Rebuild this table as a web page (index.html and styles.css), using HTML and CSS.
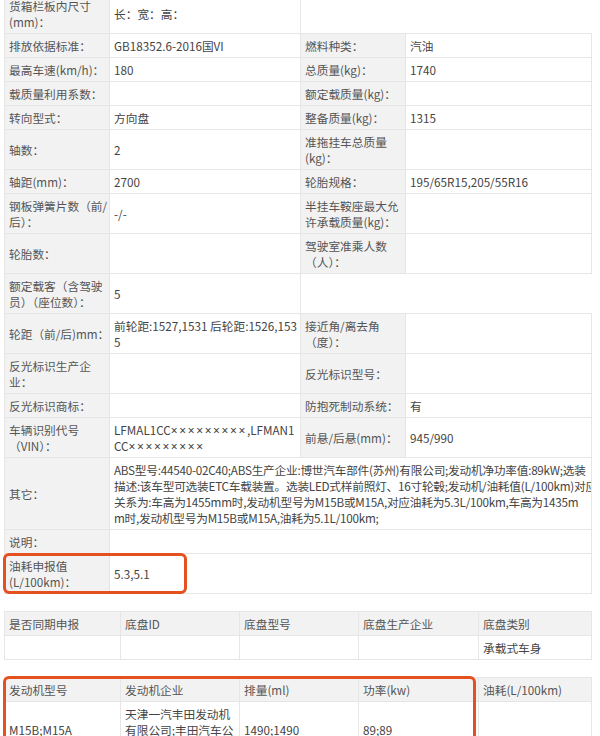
FILE: index.html
```html
<!DOCTYPE html>
<html lang="zh-CN">
<head>
<meta charset="UTF-8" />
<title>车辆参数</title>
<meta name="viewport" content="width=device-width, initial-scale=1" />
<link rel="stylesheet" href="styles.css">
</head>
<body>
  <div class="sheet">
    <!-- 主参数表 -->
    <table class="params">
      <colgroup>
        <col class="c-lbl"><col class="c-val"><col class="c-lbl"><col class="c-val2">
      </colgroup>
      <tr>
        <td class="lbl">货箱栏板内尺寸<br>(mm)：</td>
        <td>长：宽：高：</td>
        <td class="blank" colspan="2"></td>
      </tr>
      <tr>
        <td class="lbl">排放依据标准：</td><td>GB18352.6-2016国VI</td>
        <td class="lbl">燃料种类：</td><td>汽油</td>
      </tr>
      <tr>
        <td class="lbl">最高车速(km/h)：</td><td>180</td>
        <td class="lbl">总质量(kg)：</td><td>1740</td>
      </tr>
      <tr>
        <td class="lbl">载质量利用系数：</td><td></td>
        <td class="lbl">额定载质量(kg)：</td><td></td>
      </tr>
      <tr>
        <td class="lbl">转向型式：</td><td>方向盘</td>
        <td class="lbl">整备质量(kg)：</td><td>1315</td>
      </tr>
      <tr>
        <td class="lbl">轴数：</td><td>2</td>
        <td class="lbl">准拖挂车总质量<br>(kg)：</td><td></td>
      </tr>
      <tr>
        <td class="lbl">轴距(mm)：</td><td>2700</td>
        <td class="lbl">轮胎规格：</td><td>195/65R15,205/55R16</td>
      </tr>
      <tr>
        <td class="lbl">钢板弹簧片数（前/<br>后）：</td><td>-/-</td>
        <td class="lbl">半挂车鞍座最大允<br>许承载质量(kg)：</td><td></td>
      </tr>
      <tr>
        <td class="lbl">轮胎数：</td><td></td>
        <td class="lbl">驾驶室准乘人数<br>（人）：</td><td></td>
      </tr>
      <tr>
        <td class="lbl">额定载客（含驾驶<br>员）（座位数）：</td><td>5</td>
        <td class="blank" colspan="2"></td>
      </tr>
      <tr>
        <td class="lbl">轮距（前/后)mm：</td><td>前轮距:1527,1531 后轮距:1526,153<br>5</td>
        <td class="lbl">接近角/离去角<br>（度）：</td><td></td>
      </tr>
      <tr>
        <td class="lbl">反光标识生产企<br>业：</td><td></td>
        <td class="lbl">反光标识型号：</td><td></td>
      </tr>
      <tr>
        <td class="lbl">反光标识商标：</td><td></td>
        <td class="lbl">防抱死制动系统：</td><td>有</td>
      </tr>
      <tr>
        <td class="lbl">车辆识别代号<br>（VIN）：</td>
        <td>LFMAL1CC<span class="x">×××××××××</span>,LFMAN1<br>CC<span class="x">×××××××××</span></td>
        <td class="lbl">前悬/后悬(mm)：</td><td>945/990</td>
      </tr>
      <tr>
        <td class="lbl">其它：</td>
        <td class="note" colspan="3">ABS型号:44540-02C40;ABS生产企业:博世汽车部件(苏州)有限公司;发动机净功率值:89kW;选装<br>描述:该车型可选装ETC车载装置。选装LED式样前照灯、16寸轮毂;发动机/油耗值(L/100km)对应<br>关系为:车高为1455mm时,发动机型号为M15B或M15A,对应油耗为5.3L/100km,车高为1435m<br>m时,发动机型号为M15B或M15A,油耗为5.1L/100km;</td>
      </tr>
      <tr>
        <td class="lbl">说明：</td><td colspan="3"></td>
      </tr>
      <tr>
        <td class="lbl marked">油耗申报值<br>(L/100km)：<span class="ring ring-fuel"></span></td>
        <td colspan="3">5.3,5.1</td>
      </tr>
    </table>

    <!-- 底盘 -->
    <table class="grid">
      <colgroup>
        <col class="g1"><col class="g2"><col class="g3"><col class="g4"><col class="g5">
      </colgroup>
      <tr class="head">
        <td>是否同期申报</td><td>底盘ID</td><td>底盘型号</td><td>底盘生产企业</td><td>底盘类别</td>
      </tr>
      <tr>
        <td></td><td></td><td></td><td></td><td>承载式车身</td>
      </tr>
    </table>

    <!-- 发动机 -->
    <div class="engine">
      <table class="grid">
        <colgroup>
          <col class="g1"><col class="g2"><col class="g3"><col class="g4"><col class="g5">
        </colgroup>
        <tr class="head">
          <td>发动机型号</td><td>发动机企业</td><td>排量(ml)</td><td>功率(kw)</td><td>油耗(L/100km)</td>
        </tr>
        <tr>
          <td>M15B;M15A</td><td>天津一汽丰田发动机<br>有限公司;丰田汽车公<br>司</td><td>1490;1490</td><td>89;89</td><td></td>
        </tr>
      </table>
      <span class="ring ring-engine"></span>
    </div>
  </div>
</body>
</html>
```

FILE: styles.css
```css
:root {
  --line: #e6e6e6;
  --label-bg: #f2f2f2;
  --mark: #e4501e;
  --font: "Noto Sans CJK SC", sans-serif;
}

html,
body {
  margin: 0;
  padding: 0;
  background: #fff;
  color: #444;
  font-family: var(--font);
  font-size: 11.7px;
}

.sheet {
  margin-top: -7px;
  padding-left: 4px;
}

table {
  border-collapse: collapse;
  table-layout: fixed;
  width: 587px;
}

td {
  border: 1px solid var(--line);
  padding: 4px 0 3px 4px;
  line-height: 16px;
  vertical-align: middle;
  white-space: nowrap;
  overflow: hidden;
}

/* ------------ 主参数表 ------------- */
.c-lbl { width: 105px; }
.c-val { width: 191px; }
.c-val2 { width: 186px; }

td.lbl {
  background: var(--label-bg);
  color: #555;
}

td.blank {
  border-top: none;
  border-right: none;
}

td.note { letter-spacing: -0.25px; }

/* VIN 里的打码字符 */
.x {
  font-family: "Noto Sans", sans-serif;
  font-size: 12px;
  line-height: 1;
  letter-spacing: 1.6px;
}

td.marked {
  position: relative;
  overflow: visible;
}

/* 红框标注 */
.ring {
  position: absolute;
  box-sizing: border-box;
  border: 3px solid var(--mark);
  border-radius: 6px;
  pointer-events: none;
}
.ring-fuel {
  left: -2px;
  top: -1px;
  width: 184px;
  height: 41px;
}

/* ------------ 底盘 / 发动机 ------------- */
.grid { margin-top: 17px; }
.g1 { width: 116px; }
.g2 { width: 119px; }
.g3 { width: 119px; }
.g4 { width: 120px; }
.g5 { width: 113px; }

.grid .head td {
  background: var(--label-bg);
  color: #555;
}

.engine { position: relative; }
.ring-engine {
  left: -1px;
  top: -1px;
  width: 473px;
  height: 120px;
}
```
